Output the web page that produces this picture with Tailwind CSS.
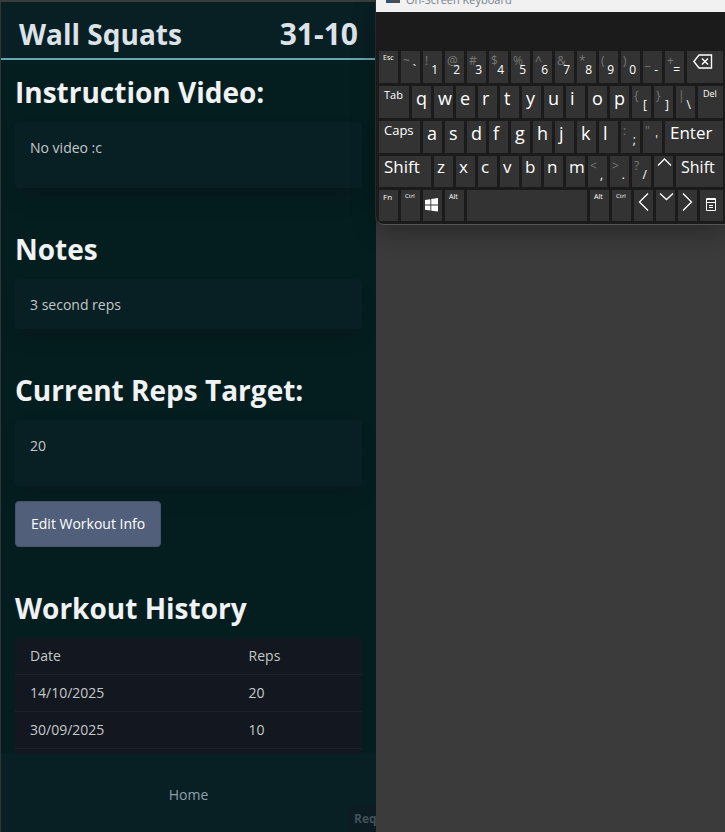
<!DOCTYPE html>
<html lang="en">
<head>
<meta charset="utf-8">
<meta name="viewport" content="width=device-width, initial-scale=1">
<title>Wall Squats</title>
<script src="https://cdn.jsdelivr.net/npm/@tailwindcss/browser@4"></script>
</head>
<body class="grid h-screen grid-cols-[376fr_349fr] overflow-hidden bg-[#3b3b3b] font-['Open_Sans','Noto_Sans',sans-serif] text-sm text-[#c4c8c9]">

<div class="flex h-screen min-w-0 flex-col overflow-hidden border-t-2 border-l border-t-[#3b3b3b] border-l-[#303535] bg-[#041e1f]">
  <header class="flex shrink-0 items-center justify-between border-b-2 border-[#67a6b0] bg-[#081f24] px-[18px] pt-3 pb-1 leading-10 font-bold text-[#dce3e8]">
    <h1 class="text-[28px]">Wall Squats</h1>
    <span class="text-[30px]">31-10</span>
  </header>

  <main class="flex min-h-0 flex-1 flex-col gap-[43px] overflow-hidden px-[14px] pt-[14px]">
    <section>
      <h2 class="mb-3 text-[28px] leading-9 font-bold text-[#f0f2f4]">Instruction Video:</h2>
      <div class="min-h-[66px] rounded-sm bg-[#081f24] px-[15px] pt-4 pb-[14px] leading-5 shadow-[0_12px_16px_-6px_rgba(10,22,26,0.7)]">No video :c</div>
    </section>
    <section>
      <h2 class="mb-3 text-[28px] leading-9 font-bold text-[#f0f2f4]">Notes</h2>
      <div class="rounded-sm bg-[#081f24] px-[15px] pt-4 pb-[14px] leading-5 shadow-[0_12px_16px_-6px_rgba(10,22,26,0.7)]">3 second reps</div>
    </section>
    <section>
      <h2 class="mb-3 text-[28px] leading-9 font-bold text-[#f0f2f4]">Current Reps Target:</h2>
      <div class="mb-[15px] min-h-[66px] rounded-sm bg-[#081f24] px-[15px] pt-4 pb-[14px] leading-5 shadow-[0_12px_16px_-6px_rgba(10,22,26,0.7)]">20</div>
      <button type="button" class="relative block rounded-sm border border-[#46536c] bg-[#525f7a] px-[15px] py-3 leading-5 text-white">Edit Workout Info</button>
    </section>
    <section>
      <h2 class="mb-3 text-[28px] leading-9 font-bold text-[#f0f2f4]">Workout History</h2>
      <table class="w-full table-fixed bg-[#13171f] text-left leading-5">
        <thead>
          <tr class="border-b border-[#1c212c]"><th scope="col" class="w-[63%] px-[15px] py-2 font-normal">Date</th><th scope="col" class="px-[15px] py-2 font-normal">Reps</th></tr>
        </thead>
        <tbody>
          <tr class="border-b border-[#1c212c]"><td class="px-[15px] py-2">14/10/2025</td><td class="px-[15px] py-2">20</td></tr>
          <tr class="border-b border-[#1c212c]"><td class="px-[15px] py-2">30/09/2025</td><td class="px-[15px] py-2">10</td></tr>
          <tr><td class="px-[15px] py-5"></td><td></td></tr>
        </tbody>
      </table>
    </section>
  </main>

  <footer class="relative flex shrink-0 justify-center bg-[#081f24] pt-[31px] pb-[27px] leading-5">
    <a href="#" class="text-[#8f9fae]">Home</a>
    <span class="absolute right-0 bottom-0 w-7 overflow-hidden bg-[#0b1c23] pl-[6px] text-[12px] leading-[26px] font-bold text-[#43505a]">Req</span>
  </footer>
</div>

<aside aria-label="On-Screen Keyboard" class="relative z-10 min-w-0 self-start rounded-bl-lg border-b border-b-[#555] bg-[#1b1b1b] text-white shadow-[0_8px_24px_rgba(0,0,0,0.3),-1px_0_0_#2b3030]">
  <div class="flex h-3 items-end gap-[6px] overflow-hidden bg-[#f1f1f1] pl-[10px]">
    <svg class="mb-[9px] h-3 w-[14px] shrink-0" viewBox="0 0 14 12" aria-hidden="true"><rect width="14" height="12" fill="#38506a"/><rect x="7" y="9" width="7" height="3" fill="#464d58"/></svg>
    <span class="mb-1 text-[11px] leading-4 text-[#777e8c]">On-Screen Keyboard</span>
  </div>
  <div id="keys" class="flex flex-col gap-[3px] pt-[39px] pr-[2px] pb-[3px] pl-[3px]"></div>
</aside>

<script>
const arrow = d => `<svg class="mx-auto block h-6 w-[19px]" viewBox="0 0 19 24" fill="none" stroke="currentColor" stroke-width="1.3" aria-hidden="true"><path d="${d}"/></svg>`;
const icons = {
  Backspace: '<svg class="mt-[3px] ml-[6px] block h-[15px] w-5" viewBox="0 0 20 15" fill="none" stroke="currentColor" stroke-width="1.4" aria-hidden="true"><path d="M6 1H18.5V14H6L.9 7.5Z"/><path d="M9 4.5l6 6M15 4.5l-6 6"/></svg>',
  Windows: '<svg class="mt-2 ml-[2px] block h-[14px] w-[13px]" viewBox="0 0 13 14" fill="currentColor" aria-hidden="true"><path d="M0 2 5.4 1.3V6.4H0ZM6.3 1.1 13 0V6.4H6.3ZM0 7.4H5.4V12.5L0 11.8ZM6.3 7.4H13V13.6L6.3 12.7Z"/></svg>',
  Menu: '<svg class="mt-2 ml-[6px] block h-[13px] w-[10px]" viewBox="0 0 10 13" fill="none" stroke="currentColor" aria-hidden="true"><path d="M.5 .5H9.5V12.5H.5ZM0 1.5H10M0 4.5H10M3 7.5H7M3 9.5H7"/></svg>',
  Up: arrow('M4 9.5 10.5 3 17 9.5'),
  Down: arrow('M4 3.5 10.5 9.5 17 3.5'),
  Left: arrow('M14 3.5 5.5 12 14 20.5'),
  Right: arrow('M5 3.5 13.5 12 5 20.5')
};
const small = 'pl-1 text-[7px] leading-[14px]';
const label = 'pl-[5px] text-[11px] leading-[17px]';
const big = 'pl-[5px] text-[17px] leading-[22px]';
// Each key: [label, relative width, text style]
const letters = s => [...s].map(c => [c, 19, 'pl-1 text-[18px] leading-6']);
const lower = s => [...s].map(c => [c, 19, 'pl-[3px] text-[17px] leading-[22px]']);
const pairs = list => list.map(p => [p, 19, 'pair']);
const rows = [
  [['Esc', 19, small], ...pairs(['~`', '!1', '@2', '#3', '$4', '%5', '^6', '&7', '*8', '(9', ')0', '_-', '+=']), ['Backspace', 36, 'icon']],
  [['Tab', 30, label], ...letters('qwertyuiop'), ...pairs(['{[', '}]', '|\\']), ['Del', 25, 'pl-[5px] text-[9px] leading-4']],
  [['Caps', 41, 'pl-[5px] text-[13px] leading-[18px]'], ...letters('asdfghjkl'), ...pairs([':;', '"\'']), ['Enter', 58, 'pl-[5px] text-[17px] leading-6']],
  [['Shift', 52, big], ...lower('zxcvbnm'), ...pairs(['<,', '>.', '?/']), ['Up', 19, 'icon'], ['Shift', 47, 'pl-[5px] text-[16px] leading-[22px]']],
  [['Fn', 19, 'pl-1 text-[8px] leading-[14px]'], ['Ctrl', 19, 'pl-1 text-[6px] leading-3'], ['Windows', 19, 'icon'], ['Alt', 19, small], ['Space', 120, 'blank'], ['Alt', 19, small], ['Ctrl', 19, 'pl-1 text-[6px] leading-3'], ['Left', 19, 'icon'], ['Down', 19, 'icon'], ['Right', 19, 'icon'], ['Menu', 23, 'icon']]
];
const esc = s => s.replace(/&/g, '&amp;').replace(/</g, '&lt;').replace(/"/g, '&quot;');
document.getElementById('keys').innerHTML = rows.map((row, i) =>
  `<div class="grid gap-[3px] ${i > 2 ? 'h-[31px]' : 'h-8'}" style="grid-template-columns:${row.map(k => `minmax(0,${k[1]}fr)`).join(' ')}">` + row.map(([t, w, style]) => {
    const base = 'h-full min-w-0 overflow-hidden bg-[#333] text-left';
    let cls = 'flex flex-col items-stretch justify-start', inner = esc(t);
    if (style === 'icon') inner = icons[t];
    else if (style === 'blank') inner = '';
    else if (style === 'pair') {
      cls = 'flex items-start justify-between pr-1 pl-[2px] text-[12px] leading-5';
      inner = `<span class="w-0 text-[#777]">${esc(t[0])}</span><span class="pt-[9px]">${esc(t[1])}</span>`;
    } else cls += ' ' + style;
    return `<button type="button" aria-label="${esc(t)}" class="${base} ${cls}">${inner}</button>`;
  }).join('') + '</div>').join('');
</script>
</body>
</html>
